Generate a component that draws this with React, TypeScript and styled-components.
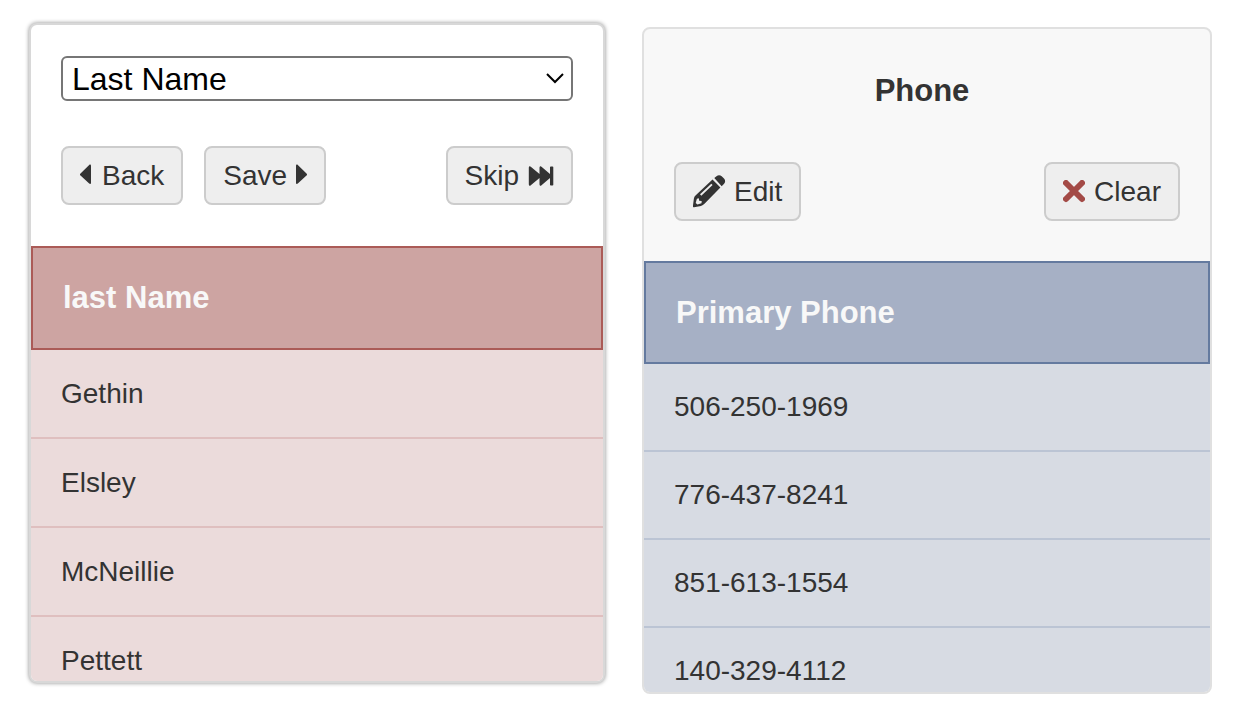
import React from "react";
import styled, { createGlobalStyle, css } from "styled-components";

const GlobalStyle = createGlobalStyle`
  *, *::before, *::after { box-sizing: border-box; }
  body {
    margin: 0;
    background: #ffffff;
    color: #333333;
    font-family: "Liberation Sans", Helvetica, Arial, sans-serif;
    font-size: 28px;
    line-height: 40px;
  }
`;

const Columns = styled.main`
  display: grid;
  grid-template-columns: 576fr 570fr;
  align-items: start;
  gap: 37px;
  padding: 23px 26px 16px 29px;
`;

const Card = styled.section<{ $active?: boolean }>`
  min-width: 0;
  overflow: hidden;
  border: 2px solid #e0e0e0;
  border-radius: 8px;
  background: #f8f8f8;
  ${(p) =>
    p.$active
      ? css`
          border-color: #d8d8d8;
          background: #ffffff;
          box-shadow: 0 0 4px rgba(0, 0, 0, 0.45);
        `
      : css`
          margin-top: 4px;
        `}
`;

const CardHead = styled.header<{ $bottom: number }>`
  display: flex;
  flex-direction: column;
  gap: 45px;
  padding: 31px 30px ${(p) => p.$bottom}px;
`;

const Title = styled.h2`
  margin: 0;
  padding: 11px 10px 6px 0;
  font-size: 31px;
  line-height: 40px;
  font-weight: bold;
  text-align: center;
`;

const SelectWrap = styled.div`
  position: relative;
  display: flex;
`;

const Select = styled.select`
  appearance: none;
  width: 100%;
  height: 45px;
  padding: 0 40px 0 9px;
  border: 2px solid #767676;
  border-radius: 6px;
  background: #ffffff;
  color: #000000;
  font-family: inherit;
  font-size: 32px;
  line-height: 40px;
`;

const Chevron = styled.svg`
  position: absolute;
  right: 9px;
  top: 16px;
  pointer-events: none;
`;

const Actions = styled.div`
  display: flex;
  gap: 21px;
`;

const Button = styled.button<{ $end?: boolean; $gap?: number }>`
  display: flex;
  align-items: center;
  gap: ${(p) => p.$gap ?? 9}px;
  height: 59px;
  margin-left: ${(p) => (p.$end ? "auto" : "0")};
  padding: 0 17px;
  border: 2px solid #cccccc;
  border-radius: 8px;
  background: #eeeeee;
  color: #333333;
  font-family: inherit;
  font-size: 28px;
  line-height: 40px;
`;

const tones = {
  red: { head: "#cda4a2", edge: "#ab5b57", row: "#ebdbdb", line: "#dfbfbf" },
  blue: { head: "#a6b0c5", edge: "#647a9f", row: "#d7dbe3", line: "#bbc4d4" },
};
type Tone = keyof typeof tones;

const Preview = styled.div<{ $height: number }>`
  max-height: ${(p) => p.$height}px;
  overflow: hidden;
`;

const Table = styled.table<{ $tone: Tone }>`
  width: 100%;
  border-collapse: separate;
  border-spacing: 0;
  text-align: left;
  background: ${(p) => tones[p.$tone].row};

  th {
    height: ${(p) => (p.$tone === "red" ? 104 : 103)}px;
    padding: 0 30px;
    border: 2px solid ${(p) => tones[p.$tone].edge};
    background: ${(p) => tones[p.$tone].head};
    color: #f8f8f8;
    font-size: 31px;
  }

  td {
    height: ${(p) => (p.$tone === "red" ? 89 : 88)}px;
    padding: 0 30px;
    border-bottom: 2px solid ${(p) => tones[p.$tone].line};
  }
`;

function DataTable({ tone, heading, rows, height }: { tone: Tone; heading: string; rows: string[]; height: number }) {
  return (
    <Preview $height={height}>
      <Table $tone={tone}>
        <thead>
          <tr>
            <th scope="col">{heading}</th>
          </tr>
        </thead>
        <tbody>
          {rows.map((row) => (
            <tr key={row}>
              <td>{row}</td>
            </tr>
          ))}
        </tbody>
      </Table>
    </Preview>
  );
}

const CaretLeft = () => (
  <svg width="13" height="24" viewBox="2 0 13 24" fill="currentColor" aria-hidden="true">
    <path d="M13 2v17c0 1-1 1.300-1.800.5L2.500 11.500c-.7-.7-.7-1.300 0-2L11.200 1c.8-.8 1.800-.3 1.800 1z" />
  </svg>
);

const CaretRight = () => (
  <svg width="11" height="24" viewBox="0 0 11 24" fill="currentColor" aria-hidden="true">
    <path d="M0 2v17c0 1 1 1.300 1.800.5L10.500 11.500c.7-.7.7-1.300 0-2L1.800 1C1 .2 0 .7 0 2z" />
  </svg>
);

const SkipForward = () => (
  <svg width="26" height="24" viewBox="0 0 26 24" fill="currentColor" aria-hidden="true">
    <path d="M.8 4c0-1.800 1-2.200 2-1.200L11.500 10V4c0-1.800 1-2.200 2-1.200L22 10V3.200c0-.5.300-.8.8-.8h1.700c.5 0 .8.300.8.8v17.600c0 .5-.3.8-.8.8h-1.700c-.5 0-.8-.3-.8-.8V14l-8.500 7.200c-1 1-2 .6-2-1.200V14l-8.700 7.200c-1 1-2 .6-2-1.200z" />
  </svg>
);

const Pencil = () => (
  <svg width="33" height="34" viewBox="1 1 33 34" fill="currentColor" aria-hidden="true">
    <path d="M22.300 4 24.500 2.200c1.700-1.500 3.700-1.300 5.200.1l2.300 2.300c1.500 1.600 1.500 3.500.1 5.100L29.700 12.300z" />
    <path
      fillRule="evenodd"
      d="M20.500 5.400 28.400 13.600 12.500 29.800Q11 31.300 9 32L2 33.300Q.8 33.300.9 32L1.900 24.500Q2.200 22.700 3.500 21.500zM19.300 9.800 8 20.300 9.300 21.700 20.600 11.100zM4.900 24.700 3.700 29 5.400 30.500 9.500 29.300 9.700 26.900 7.200 26.700 6.800 24.300z"
    />
  </svg>
);

const Cross = () => (
  <svg width="22" height="24" viewBox="1 1 22 24" fill="none" stroke="#a34a46" strokeWidth="6" strokeLinecap="round" aria-hidden="true">
    <path d="M4 4l16 16M20 4L4 20" />
  </svg>
);

const lastNames = ["Gethin", "Elsley", "McNeillie", "Pettett"];
const phones = ["506-250-1969", "776-437-8241", "851-613-1554", "140-329-4112"];

export default function App() {
  return (
    <>
      <GlobalStyle />
      <Columns>
        <Card $active>
          <CardHead $bottom={41}>
            <SelectWrap>
              <Select aria-label="Field" defaultValue="Last Name">
                <option>Last Name</option>
              </Select>
              <Chevron width="18" height="12" viewBox="0 0 18 12" fill="none" stroke="#000000" strokeWidth="2" aria-hidden="true">
                <path d="M1 2l8 8 8-8" />
              </Chevron>
            </SelectWrap>
            <Actions>
              <Button type="button">
                <CaretLeft />
                Back
              </Button>
              <Button type="button">
                Save
                <CaretRight />
              </Button>
              <Button type="button" $end>
                Skip
                <SkipForward />
              </Button>
            </Actions>
          </CardHead>
          <DataTable tone="red" heading="last Name" rows={lastNames} height={435} />
        </Card>
        <Card>
          <CardHead $bottom={40}>
            <Title>Phone</Title>
            <Actions>
              <Button type="button" $gap={8}>
                <Pencil />
                Edit
              </Button>
              <Button type="button" $end>
                <Cross />
                Clear
              </Button>
            </Actions>
          </CardHead>
          <DataTable tone="blue" heading="Primary Phone" rows={phones} height={431} />
        </Card>
      </Columns>
    </>
  );
}
